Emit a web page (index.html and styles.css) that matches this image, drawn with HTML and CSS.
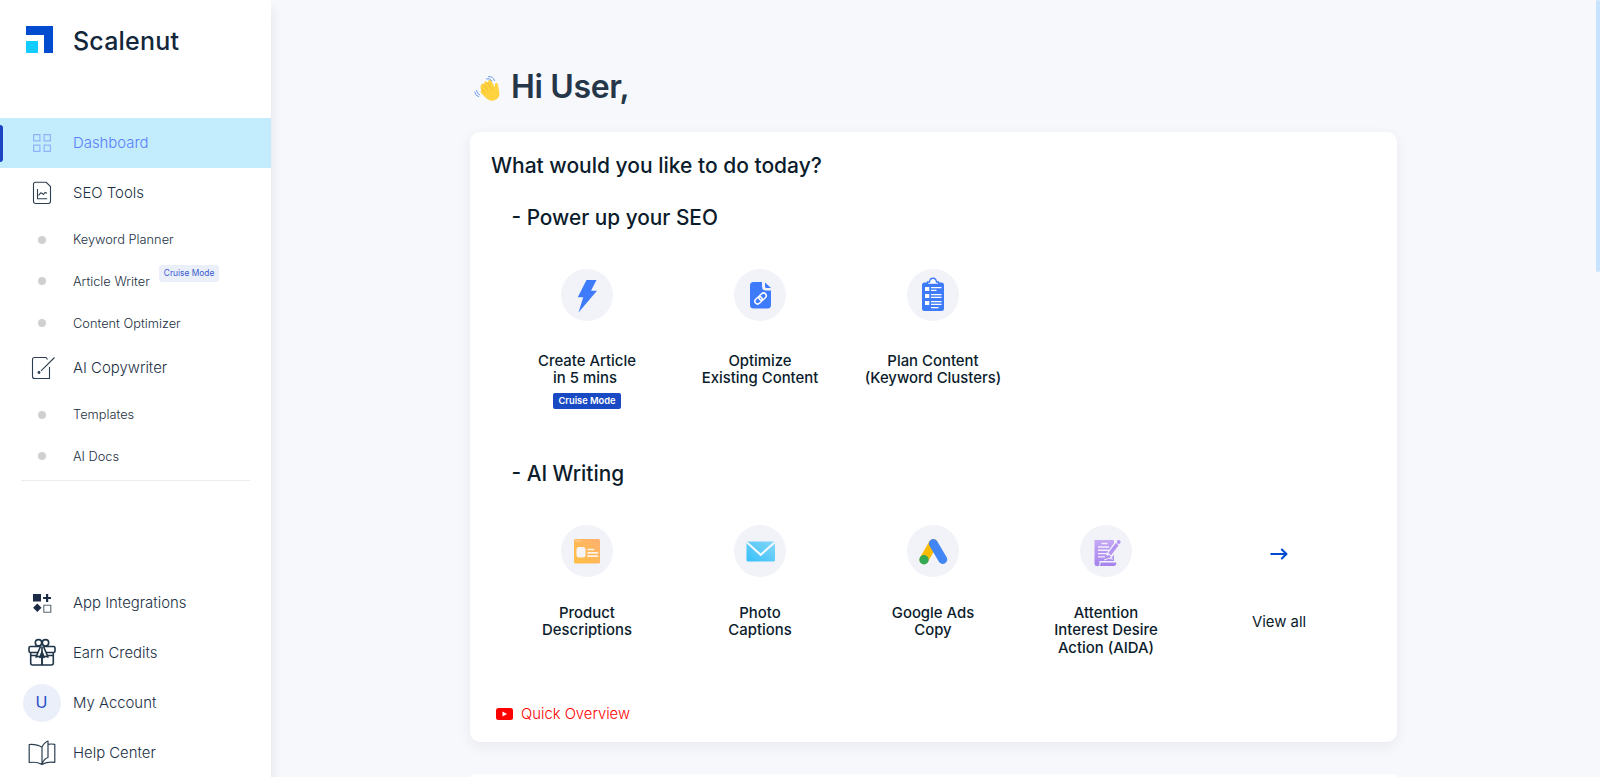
FILE: index.html
```html
<!DOCTYPE html>
<html lang="en">
<head>
  <meta charset="UTF-8">
  <meta name="viewport" content="width=device-width, initial-scale=1.0">
  <title>Scalenut - Dashboard</title>
  <link rel="stylesheet" href="styles.css">
</head>
<body>

  <aside class="sidebar">
    <div class="brand">
      <span class="icon">
        <svg width="27" height="27" viewBox="0 0 27 27"><path fill="#004bce" d="M0 0h27v27h-9V9H0z"/><path fill="#12ccff" d="M0 15h12v12H0z"/></svg>
      </span>
      <span class="brand-name">Scalenut</span>
    </div>

    <nav class="menu">
      <a class="item active">
        <span class="icon">
          <svg width="20" height="20" viewBox="0 0 20 20" fill="none" stroke="#8fb4f8" stroke-width="1.2"><path d="M1.6 1.6h6.3v6.3H1.6zM12.1 1.6h6.3v6.3h-6.3zM1.6 12.1h6.3v6.3H1.6zM12.1 12.1h6.3v6.3h-6.3z"/></svg>
        </span>
        <span>Dashboard</span>
      </a>
      <a class="item">
        <span class="icon">
          <svg width="20" height="24" viewBox="0 0 20 24" fill="none" stroke="#2c3e50" stroke-width="1.1"><path d="M3.5 1.3h10.700l4.3 4.2v14.800q0 2.200-2.200 2.200H3.700q-2.200 0-2.200-2.200V3.300q0-2 2-2z"/><path d="M5.500 8v9.700h9.700M6.500 14.500l2.200-2.600 1.300.3 1.300 1.300 1.800-2 1.900.7"/></svg>
        </span>
        <span>SEO Tools</span>
      </a>
      <a class="item sub"><span class="icon"><i class="dot"></i></span><span>Keyword Planner</span></a>
      <a class="item sub"><span class="icon"><i class="dot"></i></span><span>Article Writer</span><span class="tag">Cruise Mode</span></a>
      <a class="item sub"><span class="icon"><i class="dot"></i></span><span>Content Optimizer</span></a>
      <a class="item">
        <span class="icon pen">
          <svg width="25" height="24" viewBox="0 0 25 24" fill="none" stroke="#2c3e50" stroke-width="1.1"><path d="M16.500 3.500L15 1.500H3.500q-2 0-2 2v17q0 2 2 2h15V11"/><path d="M23.500 1.500L10 14.800"/><circle cx="8" cy="16.500" r=".9" fill="#2c3e50"/></svg>
        </span>
        <span>AI Copywriter</span>
      </a>
      <a class="item sub"><span class="icon"><i class="dot"></i></span><span>Templates</span></a>
      <a class="item sub"><span class="icon"><i class="dot"></i></span><span>AI Docs</span></a>
    </nav>

    <nav class="menu bottom">
      <a class="item">
        <span class="icon">
          <svg width="20" height="20" viewBox="0 0 20 20"><path fill="#1c2b45" d="M1 1h8v7.500H1zM14 1h2.200v2.900H19v2.200h-2.800V9H14V6.100h-2.900V3.900H14zM5.300 10.500l4.200 4.200-4.200 4.200-4.200-4.200z"/><path fill="none" stroke="#5b6874" stroke-width="1.1" d="M11.800 12.200h7v7h-7z"/></svg>
        </span>
        <span>App Integrations</span>
      </a>
      <a class="item">
        <span class="icon">
          <svg width="28" height="29" viewBox="0 0 28 29" fill="none" stroke="#1f3547" stroke-width="1.6" stroke-linejoin="round"><path d="M2.500 8.500h23q1.500 0 1.500 1.500v3q0 1.500-1.500 1.500h-23Q1 14.500 1 13v-3q0-1.500 1.500-1.500zM2.700 14.500V25q0 2 2 2h18.600q2 0 2-2V14.500M14 9v18M3 17.500h8M17 17.500h8"/><circle cx="10.500" cy="4.800" r="3.200"/><circle cx="17.500" cy="4.800" r="3.200"/><path fill="#fff" d="M12.500 8.500L8 19l3-.8 1 1.300 2-5.500 2 5.500 1-1.300 3 .8L15.500 8.500"/><path d="M14 9v18M14 14l-1.200 5h2.400z"/></svg>
        </span>
        <span>Earn Credits</span>
      </a>
      <a class="item">
        <span class="icon"><span class="avatar">U</span></span>
        <span>My Account</span>
      </a>
      <a class="item">
        <span class="icon">
          <svg width="28" height="26" viewBox="0 0 28 26" fill="none" stroke="#2c3e50" stroke-width="1.2" stroke-linejoin="round"><path d="M14 24.500Q9 21.500 1.200 22.500V4.500Q9 4 14 7.300zM14 7.300Q15.500 3 20 1v16.500Q15.500 19 14 24.500zM20 4.300q3.500-.6 6.800 0v18Q19 21.500 14 24.500"/></svg>
        </span>
        <span>Help Center</span>
      </a>
    </nav>
  </aside>

  <main class="content">
    <h1 class="greeting">
      <svg width="26" height="27" viewBox="0 0 26 27"><path fill="#ffd23f" d="M7.500 9.500q1-1.700 2.700-.3Q10 6.700 11.600 6.300q1.200-.2 2.400 1.500Q14 5 15.500 4.800q1.400 0 2.400 2.200l3 5.400q-.4-3.400.8-4.400 1.800-.7 2.300 2l1.300 7.500q.5 4.500-2.300 6.500-3 2.400-6.800 1.500-2.500-.6-5-3.300L7 18q-1.400-1.700.3-2.700L6.500 13q-.4-2.500 1-3.500z"/><path fill="none" stroke="#f2b630" stroke-width=".9" stroke-linecap="round" d="M9.800 9.500l4.200 5.700M13.500 8l4 6M7.800 14l3.700 4.200"/><path fill="none" stroke="#6f9bea" stroke-width="1" stroke-linecap="round" d="M12.500 3.800q3.500-1 5.500 2M14.500 1.600q4.500-.6 6 4M2.500 15.500q.5 3.500 3.200 4.500M.7 17q.8 4 4 4.700"/></svg>
      Hi User,
    </h1>

    <section class="card">
      <h2>What would you like to do today?</h2>

      <h3>- Power up your SEO</h3>
      <div class="tools seo">
        <div class="tool">
          <span class="circle">
            <svg width="52" height="52" viewBox="0 0 52 52"><path fill="#3e7bfa" d="M25.500 11h10L30 21.700h6L17.500 43.500l4.700-15.300h-5.400z"/></svg>
          </span>
          <p>Create Article<br>in 5 mins&nbsp;</p>
          <span class="cruise">Cruise Mode</span>
        </div>
        <div class="tool">
          <span class="circle">
            <svg width="52" height="52" viewBox="0 0 52 52"><path fill="#3e7bfa" d="M19.500 13H28v4.500q0 4 4 4h5V36q0 3.500-3.500 3.500h-14Q16 39.500 16 36V16.500q0-3.500 3.500-3.500zM31 13.500l6 5.500h-4.500Q31 19 31 17.500z"/><g fill="none" stroke="#fff" stroke-width="1.5" transform="rotate(-43 26.500 29.500)"><rect x="19.800" y="26.800" width="8" height="5.400" rx="2.700"/><rect x="25.300" y="26.800" width="8" height="5.400" rx="2.700"/></g></svg>
          </span>
          <p>Optimize<br>Existing Content</p>
        </div>
        <div class="tool">
          <span class="circle">
            <svg width="52" height="52" viewBox="0 0 52 52"><rect x="15" y="13.500" width="22" height="28.500" rx="2.500" fill="#3e7bfa"/><path d="M20.500 15.500v-2.500h2q.5-3.700 3.500-3.700t3.500 3.700h2v2.500z" fill="#fff" stroke="#3e7bfa" stroke-width="1.4"/><path fill="#fff" d="M18 18h4.300v4H18zM18 25h4.300v4H18zM18 32h4.300v4H18z"/><path stroke="#fff" stroke-width="1.3" d="M24 18.700h10.500M24 21.400h5.500M24 25.700h10.500M24 28.400h10.500M24 32.700h10.500M24 35.400h10.500M24 38.600h7.500"/></svg>
          </span>
          <p>Plan Content<br>(Keyword Clusters)</p>
        </div>
      </div>

      <h3>- AI Writing</h3>
      <div class="tools writing">
        <div class="tool">
          <span class="circle">
            <svg width="52" height="52" viewBox="0 0 52 52"><defs><linearGradient id="orange" x1="1" y1="0" x2="0" y2="1"><stop offset="0" stop-color="#ffb070"/><stop offset="1" stop-color="#ffc043"/></linearGradient></defs><rect x="13" y="14" width="26" height="24.500" rx="1.500" fill="url(#orange)"/><path stroke="#ffe3c0" stroke-width="1" stroke-dasharray="1.500 .7" d="M14.500 16h6"/><rect x="15.500" y="22" width="9" height="10.500" rx="2.500" fill="#f5f5f8"/><path stroke="#fdf3e6" stroke-width="1.7" stroke-linecap="round" d="M27 24.500h5.500M27 27.800h9.500M27 31.200h9.500"/></svg>
          </span>
          <p>Product<br>Descriptions</p>
        </div>
        <div class="tool">
          <span class="circle">
            <svg width="52" height="52" viewBox="0 0 52 52"><defs><linearGradient id="sky" x1="1" y1="0" x2="0" y2="1"><stop offset="0" stop-color="#86d6f8"/><stop offset="1" stop-color="#35c0f8"/></linearGradient></defs><rect x="12.500" y="16.500" width="28.500" height="20" rx="1.500" fill="url(#sky)"/><path fill="none" stroke="#f7fbff" stroke-width="2" d="M13 17.500l13.700 12.300L40.500 17.500"/></svg>
          </span>
          <p>Photo<br>Captions</p>
        </div>
        <div class="tool">
          <span class="circle">
            <svg width="52" height="52" viewBox="0 0 52 52" stroke-linecap="round"><path stroke="#fbbc04" stroke-width="9" d="M26.300 18.500L17 34.500"/><path stroke="#4285f4" stroke-width="9" d="M26.300 18.500l9.500 16"/><circle cx="17" cy="34.800" r="4.700" fill="#34a853"/></svg>
          </span>
          <p>Google Ads<br>Copy</p>
        </div>
        <div class="tool">
          <span class="circle">
            <svg width="52" height="52" viewBox="0 0 52 52"><defs><linearGradient id="violet" x1="0" y1="0" x2="0" y2="1"><stop offset="0" stop-color="#c5a8f5"/><stop offset="1" stop-color="#a583ee"/></linearGradient></defs><path fill="url(#violet)" d="M14.500 15H34v21H19.500v3.500q0 1.800-2.300 1.800t-2.700-2zM20.500 37.500h15.800q0 3.500-2.500 3.500H19.500q1.300-1 1-3.500z"/><path stroke="#f3f0fc" stroke-width="1.4" d="M21.500 18.500h6M18 22h11M18 25.300h11M18 28.600h9M18 31.900h7"/><path stroke="#f2f3f8" stroke-width="6.500" d="M39.500 16L28.500 31.500"/><path stroke="#b594f1" stroke-width="3.600" d="M37.200 19.200l-7.500 10"/><circle cx="38.700" cy="17" r="1.900" fill="#b594f1"/><path fill="#b594f1" d="M28.500 29.500l2.600 2-4.200 2z"/><path fill="none" stroke="#f2f3f8" stroke-width="1" d="M24 35q4-2.500 9-1"/></svg>
          </span>
          <p>Attention<br>Interest Desire<br>Action (AIDA)</p>
        </div>
        <div class="tool view-all">
          <svg width="18" height="12" viewBox="0 0 18 12" fill="none" stroke="#004bce" stroke-width="2" stroke-linecap="round" stroke-linejoin="round"><path d="M1.200 6h15M11.800 1.500L16.500 6l-4.700 4.500"/></svg>
          <p>View all</p>
        </div>
      </div>

      <a class="overview">
        <svg width="17" height="12" viewBox="0 0 17 12"><rect width="17" height="12" rx="2.500" fill="#f00"/><path fill="#fff" d="M6.500 3.500L11 6 6.500 8.500z"/></svg>
        Quick Overview
      </a>
    </section>

    <section class="card next"></section>
  </main>

  <div class="scrollbar"></div>

</body>
</html>
```
FILE: styles.css
```css
* {
  box-sizing: border-box;
}
body {
  display: flex;
  height: 777px;
  margin: 0;
  overflow: hidden;
  font-family: Inter, 'Liberation Sans', sans-serif;
  background-color: #f6f8fc;
  color: #0b1c2c;
}
svg {
  display: block;
  flex: none;
}

/* sidebar */
.sidebar {
  display: flex;
  flex-direction: column;
  flex: none;
  width: 271px;
  height: 777px;
  background-color: #fff;
  box-shadow: 4px 8px 8px rgba(40, 41, 61, 0.06);
}
.brand {
  display: flex;
  align-items: center;
  height: 118.4px;
  padding: 0 0 39px 10px;
}
.brand .icon {
  width: 63px;
  padding-left: 16px;
  justify-content: flex-start;
}
.brand-name {
  padding-top: 3px;
  font-size: 25px;
  font-weight: 500;
  letter-spacing: 0.2px;
  color: #13263a;
}
.icon {
  display: flex;
  align-items: center;
  justify-content: center;
  flex: none;
  width: 63px;
}
.menu:first-of-type::after {
  content: "";
  display: block;
  height: 1px;
  margin: 3px 21px 0;
  background-color: #ececec;
}
.bottom {
  margin-top: auto;
}
.bottom .item {
  padding-top: 1px;
}
.item {
  position: relative;
  display: flex;
  align-items: center;
  height: 50px;
  padding-left: 10px;
  font-size: 14.9px;
  font-weight: 300;
  color: #1c3044;
}
.active {
  background-color: #c3ecfd;
  color: #5a80fb;
}
.active::before {
  content: "";
  position: absolute;
  left: 0;
  top: 7px;
  width: 3px;
  height: 37px;
  border-radius: 0 3px 3px 0;
  background-color: #1a44c2;
}
.sub {
  height: 41.7px;
  padding-top: 1px;
  font-size: 12.8px;
}
.dot {
  width: 8px;
  height: 8px;
  border-radius: 50%;
  background-color: #d0d0d0;
}
.pen {
  padding-left: 4px;
}
.tag {
  margin: 0 0 15px 9px;
  padding: 0 5px;
  border-radius: 3px;
  background-color: #ebeffa;
  color: #3a5bd0;
  font-size: 8.4px;
  font-weight: 400;
  line-height: 17px;
}
.avatar {
  width: 38px;
  height: 38px;
  border-radius: 50%;
  background-color: #ebeffa;
  color: #1f4cc8;
  font-size: 16px;
  font-weight: 400;
  line-height: 37px;
  text-align: center;
}

/* main */
.content {
  width: 927px;
  height: 777px;
  margin-left: 199px;
}
.greeting {
  display: flex;
  align-items: center;
  gap: 11px;
  height: 132px;
  margin: 0;
  padding: 41px 0 0 4px;
  font-size: 32px;
  font-weight: 600;
  letter-spacing: -0.35px;
  color: #253648;
}
.greeting svg {
  margin-top: 4px;
}
.card {
  height: 610px;
  padding: 21px 30px 0 21px;
  border-radius: 10px;
  background-color: #fff;
  box-shadow: 0 4px 14px rgba(40, 41, 61, 0.07);
}
.card h2, .card h3 {
  margin: 0;
  font-size: 21px;
  font-weight: 500;
  line-height: 26px;
}
.card h3 {
  padding-left: 20.5px;
  font-size: 20.8px;
}
.card h2 {
  margin-bottom: 26px;
}
.tools {
  display: grid;
  grid-template-columns: repeat(5, 173px);
  margin-left: 9.5px;
}
.seo {
  height: 192px;
  margin-top: 38px;
}
.writing {
  height: 165px;
  margin-top: 38px;
}
.tool {
  display: flex;
  flex-direction: column;
  align-items: center;
}
.circle {
  width: 52px;
  height: 52px;
  border-radius: 50%;
  background-color: #f2f3f8;
}
.tool p {
  margin: 32px 0 0;
  font-size: 14.9px;
  font-weight: 500;
  line-height: 17.4px;
  text-align: center;
}
.writing .tool p {
  margin-top: 28px;
}
.cruise {
  margin-top: 5px;
  padding: 0 5px;
  border-radius: 2px;
  background-color: #1a49c4;
  color: #fff;
  font-size: 9.3px;
  font-weight: 600;
  line-height: 16px;
}
.view-all {
  padding-top: 23px;
}
.writing .view-all p {
  margin-top: 54px;
  font-weight: 400;
}
.overview {
  display: flex;
  align-items: center;
  gap: 8px;
  margin: 15px 0 0 5px;
  font-size: 14.8px;
  font-weight: 300;
  color: #f00;
}

/* only the top edge shows above the fold */
.next {
  height: 3px;
  margin-top: 32px;
  padding: 0;
  border-radius: 10px 10px 0 0;
}

.scrollbar {
  position: absolute;
  right: 0;
  top: 0;
  width: 4px;
  height: 272px;
  border-radius: 2px;
  background-color: #c8e3ff;
}
```
